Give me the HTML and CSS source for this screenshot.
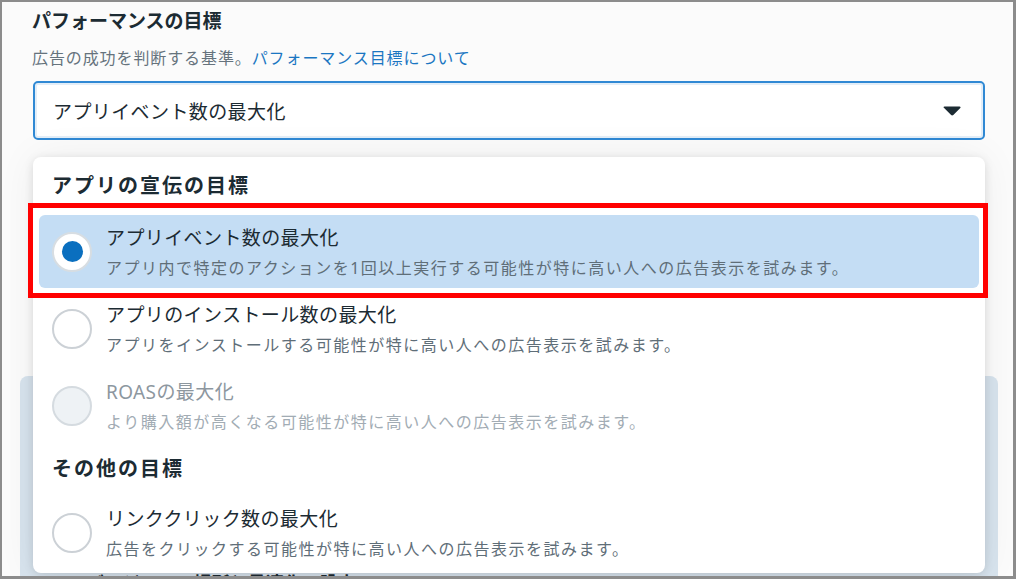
FILE: index.html
```html
<!DOCTYPE html>
<html lang="ja">
<head>
    <meta charset="UTF-8">
    <meta name="viewport" content="width=device-width, initial-scale=1.0">
    <title>パフォーマンスの目標</title>
    <link rel="stylesheet" href="styles.css">
</head>
<body>
    <div class="frame">
        <div class="page">
            <h2 class="field-title">パフォーマンスの目標</h2>
            <p class="field-help">広告の成功を判断する基準。<a href="#">パフォーマンス目標について</a></p>

            <div class="select">
                <span>アプリイベント数の最大化</span>
                <svg class="caret" width="18" height="10" viewBox="0 0 18 10">
                    <path d="M1.5 0.5h15c1 0 1.4 1 .8 1.6l-7 7c-.7.6-1.6.6-2.2 0l-7-7C.1 1.5.5.5 1.5.5z"/>
                </svg>
            </div>

            <div class="panel">
                <div class="panel-text">コンバージョンの場所と最適化の設定</div>
            </div>
        </div>

        <div class="menu">
            <div class="group-title">アプリの宣伝の目標</div>

            <div class="option selected">
                <span class="radio"></span>
                <div class="option-text">
                    <div class="option-name">アプリイベント数の最大化</div>
                    <div class="option-desc">アプリ内で特定のアクションを1回以上実行する可能性が特に高い人への広告表示を試みます。</div>
                </div>
            </div>

            <div class="option">
                <span class="radio"></span>
                <div class="option-text">
                    <div class="option-name">アプリのインストール数の最大化</div>
                    <div class="option-desc">アプリをインストールする可能性が特に高い人への広告表示を試みます。</div>
                </div>
            </div>

            <div class="option disabled">
                <span class="radio"></span>
                <div class="option-text">
                    <div class="option-name">ROASの最大化</div>
                    <div class="option-desc">より購入額が高くなる可能性が特に高い人への広告表示を試みます。</div>
                </div>
            </div>

            <div class="group-title">その他の目標</div>

            <div class="option">
                <span class="radio"></span>
                <div class="option-text">
                    <div class="option-name">リンククリック数の最大化</div>
                    <div class="option-desc">広告をクリックする可能性が特に高い人への広告表示を試みます。</div>
                </div>
            </div>
        </div>

        <div class="highlight-box"></div>
    </div>
</body>
</html>
```

FILE: styles.css
```css
body {
    margin: 0;
    background: #fff;
    font-family: "Noto Sans", "Noto Sans CJK JP", sans-serif;
    color: #1c2b33;
}

.frame {
    position: relative;
    width: 1016px;
    height: 579px;
    box-sizing: border-box;
    border: 2px solid #8c8c8c;
    border-bottom-width: 3px;
    border-right-width: 3px;
    background: #fbfbfb;
    overflow: hidden;
}

.page {
    padding-left: 31px;
}

.field-title {
    margin: 6px 0 0 -1px;
    font-size: 19px;
    line-height: 26px;
    font-weight: bold;
    color: #1c2b33;
}

.field-help {
    margin: 12px 0 0 -1px;
    font-size: 16px;
    line-height: 24px;
    letter-spacing: 0.9px;
    color: #66737d;
}

.field-help a {
    color: #1a76c2;
    text-decoration: none;
}

.select {
    display: flex;
    align-items: center;
    justify-content: space-between;
    width: 952px;
    height: 59px;
    margin-top: 11px;
    padding: 0 22px 0 18px;
    box-sizing: border-box;
    background: #fff;
    border: 2px solid #3089d4;
    border-radius: 5px;
    box-shadow: inset 0 0 0 2px #e3eef8;
    font-size: 19px;
    letter-spacing: 0.4px;
}

.caret {
    fill: #1c2b33;
}

.panel {
    width: 978px;
    height: 201px;
    margin: 236px 0 0 -13px;
    background: #d7e3ed;
    border-radius: 8px 8px 0 0;
}

.panel-text {
    padding: 195px 0 0 30px;
    font-size: 18px;
    font-weight: bold;
    line-height: 24px;
    color: #1c2b33;
}

/* open dropdown */
.menu {
    position: absolute;
    left: 31px;
    top: 155px;
    width: 952px;
    height: 416px;
    padding: 15px 6px 0;
    box-sizing: border-box;
    background: #fff;
    border-radius: 8px;
    box-shadow: 0 2px 10px rgba(0, 0, 0, 0.12), 0 0 40px rgba(0, 0, 0, 0.06);
    overflow: hidden;
}

.group-title {
    padding-left: 13px;
    font-size: 20px;
    line-height: 28px;
    letter-spacing: 2px;
    font-weight: bold;
    color: #1c2b33;
    margin-bottom: 15px;
}

.option + .group-title {
    margin-top: 13px;
    margin-bottom: 13px;
}

.option {
    display: flex;
    align-items: center;
    height: 73px;
    padding-left: 13px;
    margin-bottom: 4px;
    border-radius: 6px;
}

.option.selected {
    background: #c4ddf4;
}

.radio {
    flex: none;
    width: 40px;
    height: 40px;
    box-sizing: border-box;
    border: 2px solid #ccd1d6;
    border-radius: 50%;
    background: #fff;
    margin-right: 14px;
    display: flex;
    align-items: center;
    justify-content: center;
}

.selected .radio {
    border-color: #d7dde2;
}

.selected .radio::after {
    content: "";
    width: 21px;
    height: 21px;
    border-radius: 50%;
    background: #0a6fbf;
}

.disabled .radio {
    background: #eef2f5;
    border-color: #d5dbe0;
}

.option-text {
    margin-top: 2px;
}

.option-name {
    font-size: 19px;
    line-height: 26px;
    letter-spacing: 0.4px;
    color: #1c2b33;
}

.option-desc {
    margin-top: 4px;
    font-size: 16px;
    line-height: 26px;
    letter-spacing: 1.5px;
    color: #5f6e78;
}

.disabled .option-name {
    color: #8d979f;
}

.disabled .option-desc {
    color: #a2acb4;
}

/* red annotation */
.highlight-box {
    position: absolute;
    left: 26px;
    top: 201px;
    width: 960px;
    height: 95px;
    box-sizing: border-box;
    border: 5px solid #ff0000;
}
```
